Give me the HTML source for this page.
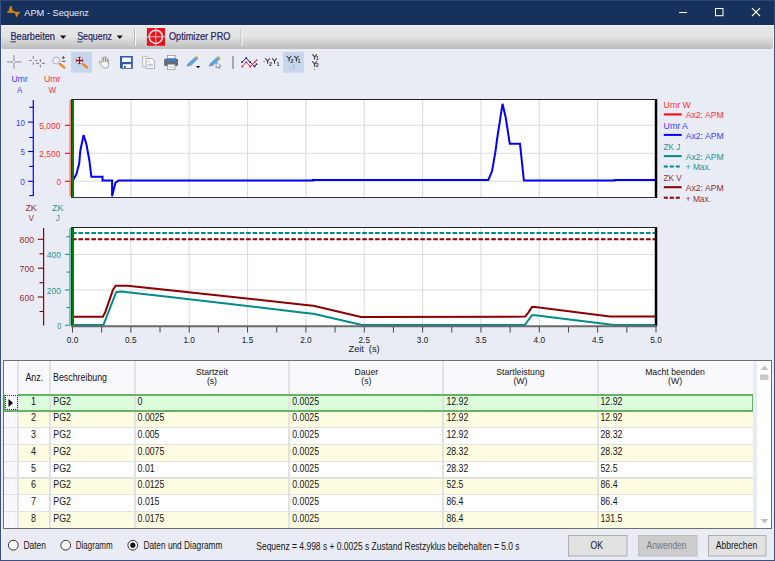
<!DOCTYPE html><html><head><meta charset="utf-8"><style>
*{margin:0;padding:0;box-sizing:border-box}
html,body{width:775px;height:561px;overflow:hidden;background:#e9ecf4;font-family:"Liberation Sans",sans-serif;position:relative}
.a{position:absolute}
svg text{font-family:"Liberation Sans",sans-serif}
</style></head><body>
<div class="a" style="left:0;top:0;width:775px;height:25px;background:#17315d"></div>
<div class="a" style="left:0;top:0;width:1px;height:561px;background:#3a5080"></div>
<div class="a" style="left:774px;top:0;width:1px;height:561px;background:#3a5080"></div>
<div class="a" style="left:0;top:0;width:775px;height:1px;background:#2f466f"></div>
<div class="a" style="left:0;top:560px;width:775px;height:1px;background:#3a5080"></div>
<div class="a" style="left:1px;top:25px;width:773px;height:23.6px;background:linear-gradient(#f4f4f4 0px,#e7e7e7 1.5px,#e5e5e5 11px,#d2d2d2 17px,#bebebe 23.6px);border-radius:0 0 3px 3px;border-right:1px solid #f4f4f4"></div>
<div class="a" style="left:3px;top:360px;width:769px;height:169px;border:1px solid #6e6e6e;background:#fff"></div>
<div class="a" style="left:4px;top:361px;width:767px;height:33.5px;background:#f8f8fd"></div>
<div class="a" style="left:4px;top:394.5px;width:13.5px;height:133px;background:#f7f7fd"></div>
<div class="a" style="left:753px;top:361px;width:4px;height:167px;background:#e8ebf3"></div>
<div class="a" style="left:757px;top:361px;width:14px;height:167px;background:#ffffff"></div>
<div class="a" style="left:17.5px;top:394.50px;width:735.1px;height:16.69px;background:#dcfcdc"></div>
<div class="a" style="left:17.5px;top:411.19px;width:735.1px;height:16.69px;background:#fefde2"></div>
<div class="a" style="left:17.5px;top:427.88px;width:735.1px;height:16.69px;background:#ffffff"></div>
<div class="a" style="left:17.5px;top:444.57px;width:735.1px;height:16.69px;background:#fefde2"></div>
<div class="a" style="left:17.5px;top:461.26px;width:735.1px;height:16.69px;background:#ffffff"></div>
<div class="a" style="left:17.5px;top:477.95px;width:735.1px;height:16.69px;background:#fefde2"></div>
<div class="a" style="left:17.5px;top:494.64px;width:735.1px;height:16.69px;background:#ffffff"></div>
<div class="a" style="left:17.5px;top:511.33px;width:735.1px;height:16.69px;background:#fefde2"></div>
<div class="a" style="left:4px;top:410.59px;width:749px;height:1.2px;background:#e2e2e2"></div>
<div class="a" style="left:4px;top:427.28px;width:749px;height:1.2px;background:#e2e2e2"></div>
<div class="a" style="left:4px;top:443.97px;width:749px;height:1.2px;background:#e2e2e2"></div>
<div class="a" style="left:4px;top:460.66px;width:749px;height:1.2px;background:#e2e2e2"></div>
<div class="a" style="left:4px;top:477.35px;width:749px;height:1.2px;background:#e2e2e2"></div>
<div class="a" style="left:4px;top:494.04px;width:749px;height:1.2px;background:#e2e2e2"></div>
<div class="a" style="left:4px;top:510.73px;width:749px;height:1.2px;background:#e2e2e2"></div>
<div class="a" style="left:16.7px;top:361px;width:2px;height:167px;background:#e2e2e2"></div>
<div class="a" style="left:48.9px;top:361px;width:2px;height:167px;background:#e2e2e2"></div>
<div class="a" style="left:133.6px;top:361px;width:2px;height:167px;background:#e2e2e2"></div>
<div class="a" style="left:288.3px;top:361px;width:2px;height:167px;background:#e2e2e2"></div>
<div class="a" style="left:442.4px;top:361px;width:2px;height:167px;background:#e2e2e2"></div>
<div class="a" style="left:596.5px;top:361px;width:2px;height:167px;background:#e2e2e2"></div>
<div class="a" style="left:17.5px;top:394px;width:735.5px;height:2px;background:#66b266"></div>
<div class="a" style="left:4px;top:410px;width:749px;height:2px;background:#66b266"></div>
<div class="a" style="left:751.5px;top:394px;width:1.5px;height:18px;background:#66b266"></div>
<div class="a" style="left:4px;top:394.5px;width:1.2px;height:17px;background:#66b266"></div>
<div class="a" style="left:4.8px;top:395px;width:12.8px;height:15.4px;border:1px dotted #333"></div>
<svg class="a" style="left:0;top:0" width="775" height="561" viewBox="0 0 775 561"><path d="M7 12.6 L8.6 11 L10 6 L11.6 6 L12.6 10.5 L15 11.2 L15 12.6 Z" fill="#d08010"/><path d="M7 12.3 H20" stroke="#d08010" stroke-width="1"/><path d="M14.3 12 L20 12 L16.5 17.5 Z" fill="#d08010"/><path d="M679 12.5 H687" stroke="#fff" stroke-width="1"/><rect x="715.5" y="8.5" width="7.5" height="7.2" fill="none" stroke="#fff" stroke-width="1"/><path d="M752 8.2 L760 16 M760 8.2 L752 16" stroke="#fff" stroke-width="1.1"/><text x="24.30" y="16.10" font-size="9.9" fill="#e8eef8" textLength="64.70" lengthAdjust="spacingAndGlyphs">APM - Sequenz</text><text x="10.40" y="40.10" font-size="10.4" fill="#241f62" textLength="44.60" lengthAdjust="spacingAndGlyphs" stroke="#241f62" stroke-width="0.22">Bearbeiten</text><path d="M10.4 41.8 H16" stroke="#2f2a6a" stroke-width="0.9"/><text x="77.20" y="40.10" font-size="10.4" fill="#241f62" textLength="34.80" lengthAdjust="spacingAndGlyphs" stroke="#241f62" stroke-width="0.22">Sequenz</text><path d="M77.2 41.8 H82.5" stroke="#2f2a6a" stroke-width="0.9"/><text x="169.00" y="40.10" font-size="10.4" fill="#241f62" textLength="61.40" lengthAdjust="spacingAndGlyphs" stroke="#241f62" stroke-width="0.22">Optimizer PRO</text><path d="M60 35.6 H66.2 L63.1 39 Z M116.7 35.6 H122.9 L119.8 39 Z" fill="#111"/><path d="M134.5 29 V46 M241 29 V46" stroke="#b8b8b8" stroke-width="1"/><path d="M135.5 29 V46 M242 29 V46" stroke="#f8f8f8" stroke-width="1"/><rect x="146.9" y="28" width="18.1" height="17.8" fill="#e6121c"/><circle cx="155.8" cy="36.8" r="6.6" fill="none" stroke="#fbe4e4" stroke-width="1.5"/><path d="M146.9 36.8 H165 M155.8 28 V45.8" stroke="#f6d8d8" stroke-width="0.9"/><rect x="71" y="52" width="21" height="20.7" fill="#c6d6ec"/><rect x="283" y="52" width="21" height="20.7" fill="#c6d6ec"/><path d="M7.1 61.9 H13 M14.8 61.9 H21.6 M13.9 55.1 V61 M13.9 62.8 V68.8" stroke="#b4b4b4" stroke-width="1.7"/><path d="M29 60.5 H31.8 M34.7 60.5 H37.5 M33.3 56.3 V59.1 M33.3 62.2 V64.8 M36.1 63.4 H39 M41.8 63.4 H44.9 M40.4 59.1 V62 M40.4 64.8 V67.6" stroke="#8c8c8c" stroke-width="1.2"/><circle cx="56.2" cy="60.5" r="3.5" fill="#f2f2f2" stroke="#93a3cc" stroke-width="0.9"/><path d="M60 64 L64.3 67.7" stroke="#ee8a1c" stroke-width="2.4" stroke-linecap="round"/><path d="M61.6 57.7 H65.2 M63.4 56 V59.4 M61.6 61.4 H65.6" stroke="#505050" stroke-width="0.9"/><circle cx="79.5" cy="60.5" r="3.6" fill="#f4f4f4" stroke="#93a3cc" stroke-width="0.9"/><path d="M76 60.5 H83 M79.5 57 V64" stroke="#a01010" stroke-width="1.3"/><path d="M75.8 60.5 L77 59.3 L77 61.7 Z M83.2 60.5 L82 59.3 L82 61.7 Z M79.5 56.8 L78.3 58 L80.7 58 Z M79.5 64.2 L78.3 63 L80.7 63 Z" fill="#a01010"/><path d="M83.4 64.4 L87 67.5" stroke="#ee8a1c" stroke-width="2.4" stroke-linecap="round"/><path d="M101.5 62.5 L100 61.2 Q99 60.8 99.2 62 L102 66.5 Q103.5 68.2 105.5 68 L107 68 Q108.6 67.5 108.6 65.5 L108.6 59.8 Q108.2 58.8 107.4 59.3 L107.2 62.5 M107.2 62 L107 58 Q106.6 57 105.6 57.5 L105.4 62 M105.4 61.5 L105.2 57 Q104.6 56.2 103.8 56.8 L103.6 62 M103.6 61.5 L103.4 58 Q102.8 57.2 102 57.8 L101.8 63.5" fill="#fafafa" stroke="#8a8a8a" stroke-width="0.75"/><path d="M120 56 H132.8 V68.8 H121.2 L120 67.6 Z" fill="#2f5aa5"/><rect x="122" y="57.4" width="9.1" height="4.5" rx="0.6" fill="#fff"/><rect x="122.8" y="64.2" width="8.3" height="3.7" fill="#fff"/><rect x="124" y="65.9" width="1.8" height="2" fill="#2f5aa5"/><path d="M142.6 56.3 H147.5 L149.2 58 V66.8 H142.6 Z" fill="#f6f6f6" stroke="#b0b0b0" stroke-width="0.8"/><path d="M146 58.5 H152 L154.6 61.1 V68.5 H146 Z" fill="#fafafa" stroke="#a0a0a0" stroke-width="0.8"/><path d="M147.5 61.5 H149.5 M147.5 64.3 H153 M147.5 65.8 H153" stroke="#9aa4d4" stroke-width="0.7"/><rect x="167.5" y="55.4" width="7.5" height="3.5" fill="#fdfdfd" stroke="#8a8a8a" stroke-width="0.7"/><rect x="164.1" y="58.8" width="13.9" height="7.1" rx="0.8" fill="#6a6a6a"/><rect x="166.4" y="58.4" width="9.4" height="3" fill="#3b7ac6"/><rect x="167.5" y="64.2" width="7.5" height="5.1" fill="#fdfdfd" stroke="#8a8a8a" stroke-width="0.7"/><rect x="168.5" y="66.5" width="5.5" height="1" fill="#9cc0e8"/><path d="M187 66.1 L188.2 63.6 L195.6 56.8 L197.8 59 L190.4 65.8 Z" fill="#5aa6e6" stroke="#3a86cc" stroke-width="0.4"/><path d="M195.2 57.2 L196.4 56 L198.6 58.2 L197.4 59.4 Z" fill="#f0a020"/><path d="M187 66.1 L188.2 63.6 L189.6 65 Z" fill="#888"/><path d="M196 66 H200.2 L198.1 68.3 Z" fill="#111"/><path d="M209.1 66.1 L210.3 63.6 L217.7 56.8 L219.9 59 L212.5 65.8 Z" fill="#5aa6e6" stroke="#3a86cc" stroke-width="0.4"/><path d="M217.3 57.2 L218.5 56 L220.7 58.2 L219.5 59.4 Z" fill="#f0a020"/><path d="M209.1 66.1 L210.3 63.6 L211.7 65 Z" fill="#888"/><path d="M216.2 62 V68 L217.6 66.8 L218.8 68.6 L219.8 68.1 L218.8 66.3 L221 66.2 Z" fill="#fff" stroke="#707070" stroke-width="0.7"/><path d="M233 56 V69" stroke="#9a9a9a" stroke-width="1.6"/><polyline points="242,62.2 246.2,58 250.2,62.2 254.5,66.5 256.5,64.2" fill="none" stroke="#22228a" stroke-width="1"/><polyline points="242.3,66.5 246.2,62.2 250.2,66.5 254.5,62.2 256.5,60.2" fill="none" stroke="#ee3030" stroke-width="1"/><circle cx="242" cy="62.2" r="0.9" fill="#1a1a8a"/><circle cx="246.2" cy="58" r="0.9" fill="#1a1a8a"/><circle cx="250.2" cy="62.2" r="0.9" fill="#1a1a8a"/><circle cx="254.5" cy="66.5" r="0.9" fill="#1a1a8a"/><circle cx="256.5" cy="64.2" r="0.9" fill="#1a1a8a"/><circle cx="242.3" cy="66.5" r="0.9" fill="#ee2020"/><circle cx="246.2" cy="62.2" r="0.9" fill="#ee2020"/><circle cx="250.2" cy="66.5" r="0.9" fill="#ee2020"/><circle cx="254.5" cy="62.2" r="0.9" fill="#ee2020"/><circle cx="256.5" cy="60.2" r="0.9" fill="#ee2020"/><path d="M263.3 61.5 H265" stroke="#777" stroke-width="0.8"/><path d="M265.3 58.3 L267.55 61.0 L269.8 58.3 M267.55 61.0 V63.699999999999996" fill="none" stroke="#3a3a3a" stroke-width="1.1"/><text x="269" y="65.6" font-size="5.4" font-weight="bold" fill="#3a3a3a">2</text><path d="M272.3 58.3 L274.55 61.0 L276.8 58.3 M274.55 61.0 V63.699999999999996" fill="none" stroke="#3a3a3a" stroke-width="1.1"/><text x="276.4" y="65.6" font-size="5.4" font-weight="bold" fill="#3a3a3a">1</text><path d="M286.8 56 L289.05 58.7 L291.3 56 M289.05 58.7 V61.4" fill="none" stroke="#3a3a3a" stroke-width="1.1"/><text x="290.6" y="63" font-size="5.4" font-weight="bold" fill="#3a3a3a">2</text><path d="M294.2 56 L296.45 58.7 L298.7 56 M296.45 58.7 V61.4" fill="none" stroke="#3a3a3a" stroke-width="1.1"/><text x="297.6" y="63" font-size="5.4" font-weight="bold" fill="#3a3a3a">1</text><path d="M293.6 65 V68.8" stroke="#777" stroke-width="0.8" stroke-dasharray="1 1.2"/><path d="M312.4 54.3 L314.59999999999997 56.849999999999994 L316.79999999999995 54.3 M314.59999999999997 56.849999999999994 V59.4" fill="none" stroke="#3a3a3a" stroke-width="1.1"/><text x="315.8" y="59.8" font-size="5.4" font-weight="bold" fill="#3a3a3a">1</text><path d="M312.4 61.4 L314.59999999999997 64.1 L316.79999999999995 61.4 M314.59999999999997 64.1 V66.8" fill="none" stroke="#3a3a3a" stroke-width="1.1"/><text x="315.8" y="67.2" font-size="5.4" font-weight="bold" fill="#3a3a3a">2</text><circle cx="314.4" cy="69.3" r="0.5" fill="#555"/><rect x="71" y="99" width="586" height="99" fill="#fff"/><path d="M130.85 99 V198" stroke="#dcdcdc" stroke-width="1.1"/><path d="M189.20 99 V198" stroke="#dcdcdc" stroke-width="1.1"/><path d="M247.55 99 V198" stroke="#dcdcdc" stroke-width="1.1"/><path d="M305.90 99 V198" stroke="#dcdcdc" stroke-width="1.1"/><path d="M364.25 99 V198" stroke="#dcdcdc" stroke-width="1.1"/><path d="M422.60 99 V198" stroke="#dcdcdc" stroke-width="1.1"/><path d="M480.95 99 V198" stroke="#dcdcdc" stroke-width="1.1"/><path d="M539.30 99 V198" stroke="#dcdcdc" stroke-width="1.1"/><path d="M597.65 99 V198" stroke="#dcdcdc" stroke-width="1.1"/><path d="M71 125.3 H655" stroke="#dcdcdc" stroke-width="1.1"/><path d="M71 153.3 H655" stroke="#dcdcdc" stroke-width="1.1"/><path d="M71 181.3 H655" stroke="#dcdcdc" stroke-width="1.1"/><polyline points="72.9,180.6 76.4,174.2 79.3,162.8 80.3,150.7 83.6,135 86.4,144.3 89.3,160 91.4,176.8 102.5,176.8 102.5,180.6 112.1,180.6 112.1,196.3 115.4,182.8 118.5,180.6 313,180.6 313,180 488.3,180 492,171.3 495.4,151.8 497.1,139 499.7,122.1 502.5,103.8 505.6,117 509.8,143.8 520,143.8 523.9,180.6 614.5,180.6 614.5,180 655,180" fill="none" stroke="#0000ff" stroke-width="2"/><path d="M73 99 V198" stroke="#008000" stroke-width="2"/><path d="M71 99.5 H657" stroke="#222" stroke-width="1"/><path d="M71 197.5 H657" stroke="#333" stroke-width="1"/><path d="M71.5 99 V198" stroke="#333" stroke-width="1"/><path d="M656 99 V198" stroke="#000" stroke-width="2.5"/><path d="M33.3 100 V196" stroke="#0000ff" stroke-width="1.2"/><path d="M28 122.1 H33.3" stroke="#0000ff" stroke-width="1.1"/><path d="M28 151.5 H33.3" stroke="#0000ff" stroke-width="1.1"/><path d="M28 181.3 H33.3" stroke="#0000ff" stroke-width="1.1"/><path d="M29.2 107.3 H33.3" stroke="#0000ff" stroke-width="1.1"/><path d="M29.2 137.5 H33.3" stroke="#0000ff" stroke-width="1.1"/><path d="M29.2 166.4 H33.3" stroke="#0000ff" stroke-width="1.1"/><path d="M29.2 195.6 H33.3" stroke="#0000ff" stroke-width="1.1"/><path d="M70.2 100 V196" stroke="#ff8080" stroke-width="1.6"/><path d="M65 125.3 H70" stroke="#ff0000" stroke-width="1.1"/><path d="M65 153.3 H70" stroke="#ff0000" stroke-width="1.1"/><path d="M65 181.3 H70" stroke="#ff0000" stroke-width="1.1"/><text x="16.00" y="125.80" font-size="9" fill="#3c3cff" textLength="8.80" lengthAdjust="spacingAndGlyphs">10</text><text x="20.40" y="155.10" font-size="9" fill="#3c3cff" textLength="4.40" lengthAdjust="spacingAndGlyphs">5</text><text x="20.20" y="184.90" font-size="9" fill="#3c3cff" textLength="4.60" lengthAdjust="spacingAndGlyphs">0</text><text x="39.30" y="129.00" font-size="9" fill="#ff3030" textLength="21.20" lengthAdjust="spacingAndGlyphs">5,000</text><text x="39.30" y="157.00" font-size="9" fill="#ff3030" textLength="21.20" lengthAdjust="spacingAndGlyphs">2,500</text><text x="56.50" y="185.00" font-size="9" fill="#ff3030" textLength="4.50" lengthAdjust="spacingAndGlyphs">0</text><text x="11.60" y="82.40" font-size="9" fill="#3c3cff" textLength="16.30" lengthAdjust="spacingAndGlyphs">Umr</text><text x="17.10" y="92.80" font-size="9" fill="#3c3cff" textLength="5.40" lengthAdjust="spacingAndGlyphs">A</text><text x="44.00" y="82.40" font-size="9" fill="#ff3030" textLength="16.40" lengthAdjust="spacingAndGlyphs">Umr</text><text x="48.38" y="92.80" font-size="9" fill="#ff3030" textLength="7.65" lengthAdjust="spacingAndGlyphs">W</text><rect x="71" y="227.5" width="586" height="98.5" fill="#fff"/><path d="M130.85 227.5 V326" stroke="#dcdcdc" stroke-width="1.1"/><path d="M189.20 227.5 V326" stroke="#dcdcdc" stroke-width="1.1"/><path d="M247.55 227.5 V326" stroke="#dcdcdc" stroke-width="1.1"/><path d="M305.90 227.5 V326" stroke="#dcdcdc" stroke-width="1.1"/><path d="M364.25 227.5 V326" stroke="#dcdcdc" stroke-width="1.1"/><path d="M422.60 227.5 V326" stroke="#dcdcdc" stroke-width="1.1"/><path d="M480.95 227.5 V326" stroke="#dcdcdc" stroke-width="1.1"/><path d="M539.30 227.5 V326" stroke="#dcdcdc" stroke-width="1.1"/><path d="M597.65 227.5 V326" stroke="#dcdcdc" stroke-width="1.1"/><path d="M71 254.5 H655" stroke="#dcdcdc" stroke-width="1.1"/><path d="M71 290 H655" stroke="#dcdcdc" stroke-width="1.1"/><path d="M72 233.1 H655" stroke="#008b8b" stroke-width="2" stroke-dasharray="4.6 1.85"/><path d="M72 239.3 H655" stroke="#8b0000" stroke-width="2" stroke-dasharray="4.6 1.85"/><polyline points="72,316.7 102.8,316.7 105,312.8 113,289.8 115.7,285.8 127.4,285.8 170,290.3 305.8,304.9 313.5,305.8 361,317 525.2,316.6 527.7,313.5 531.9,307.1 535.2,307.1 609.9,316.6 655,316.6" fill="none" stroke="#8b0000" stroke-width="2"/><polyline points="72,325 103.4,325 116.2,292.2 121,291.4 170,297 305.8,312.9 313.5,313.8 362,325 524.8,325 531.9,315.2 535.2,315.2 614.1,325 655,325" fill="none" stroke="#008b8b" stroke-width="2"/><path d="M73 227.5 V326" stroke="#008000" stroke-width="2"/><path d="M71 227.5 H657" stroke="#222" stroke-width="1"/><path d="M71.5 227.5 V326" stroke="#333" stroke-width="1"/><path d="M656 227.5 V326" stroke="#000" stroke-width="2.5"/><path d="M71 326.2 H657" stroke="#6a6a6a" stroke-width="2"/><path d="M72.50 327 V332.5" stroke="#444" stroke-width="1"/><path d="M101.67 327 V332.5" stroke="#444" stroke-width="1"/><path d="M130.85 327 V332.5" stroke="#444" stroke-width="1"/><path d="M160.03 327 V332.5" stroke="#444" stroke-width="1"/><path d="M189.20 327 V332.5" stroke="#444" stroke-width="1"/><path d="M218.38 327 V332.5" stroke="#444" stroke-width="1"/><path d="M247.55 327 V332.5" stroke="#444" stroke-width="1"/><path d="M276.73 327 V332.5" stroke="#444" stroke-width="1"/><path d="M305.90 327 V332.5" stroke="#444" stroke-width="1"/><path d="M335.07 327 V332.5" stroke="#444" stroke-width="1"/><path d="M364.25 327 V332.5" stroke="#444" stroke-width="1"/><path d="M393.43 327 V332.5" stroke="#444" stroke-width="1"/><path d="M422.60 327 V332.5" stroke="#444" stroke-width="1"/><path d="M451.78 327 V332.5" stroke="#444" stroke-width="1"/><path d="M480.95 327 V332.5" stroke="#444" stroke-width="1"/><path d="M510.12 327 V332.5" stroke="#444" stroke-width="1"/><path d="M539.30 327 V332.5" stroke="#444" stroke-width="1"/><path d="M568.48 327 V332.5" stroke="#444" stroke-width="1"/><path d="M597.65 327 V332.5" stroke="#444" stroke-width="1"/><path d="M626.83 327 V332.5" stroke="#444" stroke-width="1"/><path d="M656.00 327 V332.5" stroke="#444" stroke-width="1"/><text x="66.75" y="342.70" font-size="9" fill="#1a1a1a" textLength="11.51" lengthAdjust="spacingAndGlyphs">0.0</text><text x="125.10" y="342.70" font-size="9" fill="#1a1a1a" textLength="11.51" lengthAdjust="spacingAndGlyphs">0.5</text><text x="183.45" y="342.70" font-size="9" fill="#1a1a1a" textLength="11.51" lengthAdjust="spacingAndGlyphs">1.0</text><text x="241.80" y="342.70" font-size="9" fill="#1a1a1a" textLength="11.51" lengthAdjust="spacingAndGlyphs">1.5</text><text x="300.15" y="342.70" font-size="9" fill="#1a1a1a" textLength="11.51" lengthAdjust="spacingAndGlyphs">2.0</text><text x="358.50" y="342.70" font-size="9" fill="#1a1a1a" textLength="11.51" lengthAdjust="spacingAndGlyphs">2.5</text><text x="416.85" y="342.70" font-size="9" fill="#1a1a1a" textLength="11.51" lengthAdjust="spacingAndGlyphs">3.0</text><text x="475.20" y="342.70" font-size="9" fill="#1a1a1a" textLength="11.51" lengthAdjust="spacingAndGlyphs">3.5</text><text x="533.55" y="342.70" font-size="9" fill="#1a1a1a" textLength="11.51" lengthAdjust="spacingAndGlyphs">4.0</text><text x="591.90" y="342.70" font-size="9" fill="#1a1a1a" textLength="11.51" lengthAdjust="spacingAndGlyphs">4.5</text><text x="650.25" y="342.70" font-size="9" fill="#1a1a1a" textLength="11.51" lengthAdjust="spacingAndGlyphs">5.0</text><text x="348.50" y="352.00" font-size="9" fill="#1a1a1a" textLength="15.40" lengthAdjust="spacingAndGlyphs">Zeit</text><text x="368.80" y="352.00" font-size="9" fill="#1a1a1a" textLength="10.90" lengthAdjust="spacingAndGlyphs">(s)</text><path d="M43.6 228 V325.5" stroke="#8b0000" stroke-width="1.2"/><path d="M37.8 239.3 H43.6" stroke="#8b0000" stroke-width="1.1"/><text x="19.60" y="243.00" font-size="9" fill="#963030" textLength="14.60" lengthAdjust="spacingAndGlyphs">800</text><path d="M37.8 268.2 H43.6" stroke="#8b0000" stroke-width="1.1"/><text x="19.60" y="271.85" font-size="9" fill="#963030" textLength="14.60" lengthAdjust="spacingAndGlyphs">700</text><path d="M37.8 297.0 H43.6" stroke="#8b0000" stroke-width="1.1"/><text x="19.60" y="300.70" font-size="9" fill="#963030" textLength="14.60" lengthAdjust="spacingAndGlyphs">600</text><path d="M39.5 253.8 H43.6" stroke="#8b0000" stroke-width="1.1"/><path d="M39.5 282.7 H43.6" stroke="#8b0000" stroke-width="1.1"/><path d="M39.5 311.5 H43.6" stroke="#8b0000" stroke-width="1.1"/><path d="M70 228 V325.5" stroke="#78bcc0" stroke-width="2"/><path d="M65 254.4 H69.5" stroke="#1f9494" stroke-width="1.1"/><text x="46.80" y="258.12" font-size="9" fill="#1f9494" textLength="14.10" lengthAdjust="spacingAndGlyphs">400</text><path d="M65 289.9 H69.5" stroke="#1f9494" stroke-width="1.1"/><text x="46.80" y="293.56" font-size="9" fill="#1f9494" textLength="14.10" lengthAdjust="spacingAndGlyphs">200</text><path d="M65 325.3 H69.5" stroke="#1f9494" stroke-width="1.1"/><text x="57.20" y="329.00" font-size="9" fill="#1f9494" textLength="4.10" lengthAdjust="spacingAndGlyphs">0</text><path d="M66.4 236.7 H69.5" stroke="#1f9494" stroke-width="1.1"/><path d="M66.4 272.1 H69.5" stroke="#1f9494" stroke-width="1.1"/><path d="M66.4 307.6 H69.5" stroke="#1f9494" stroke-width="1.1"/><text x="25.40" y="210.50" font-size="9" fill="#963030" textLength="11.40" lengthAdjust="spacingAndGlyphs">ZK</text><text x="28.40" y="220.80" font-size="9" fill="#963030" textLength="5.40" lengthAdjust="spacingAndGlyphs">V</text><text x="52.00" y="210.50" font-size="9" fill="#1f9494" textLength="11.50" lengthAdjust="spacingAndGlyphs">ZK</text><text x="55.77" y="220.80" font-size="9" fill="#1f9494" textLength="4.05" lengthAdjust="spacingAndGlyphs">J</text><text x="663.60" y="107.80" font-size="9" fill="#ff3030" textLength="27.10" lengthAdjust="spacingAndGlyphs">Umr W</text><path d="M663.8 114.4 H681.7" stroke="#ff0000" stroke-width="2"/><text x="685.70" y="118.10" font-size="9" fill="#ff3030" textLength="38.00" lengthAdjust="spacingAndGlyphs">Ax2: APM</text><text x="663.60" y="128.70" font-size="9" fill="#3c3cff" textLength="24.40" lengthAdjust="spacingAndGlyphs">Umr A</text><path d="M663.8 134.9 H681.7" stroke="#0000ff" stroke-width="2"/><text x="685.70" y="138.70" font-size="9" fill="#3c3cff" textLength="38.00" lengthAdjust="spacingAndGlyphs">Ax2: APM</text><text x="663.60" y="149.60" font-size="9" fill="#1f9494" textLength="16.65" lengthAdjust="spacingAndGlyphs">ZK J</text><path d="M663.8 156.1 H681.7" stroke="#008b8b" stroke-width="2"/><text x="685.70" y="159.90" font-size="9" fill="#1f9494" textLength="38.00" lengthAdjust="spacingAndGlyphs">Ax2: APM</text><path d="M663.8 166.4 H681.7" stroke="#008b8b" stroke-width="2" stroke-dasharray="4 2"/><text x="685.70" y="170.20" font-size="9" fill="#1f9494" textLength="25.30" lengthAdjust="spacingAndGlyphs">+ Max.</text><text x="663.60" y="180.70" font-size="9" fill="#963030" textLength="18.00" lengthAdjust="spacingAndGlyphs">ZK V</text><path d="M663.8 187.2 H681.7" stroke="#8b0000" stroke-width="2"/><text x="685.70" y="191.00" font-size="9" fill="#963030" textLength="38.00" lengthAdjust="spacingAndGlyphs">Ax2: APM</text><path d="M663.8 197.8 H681.7" stroke="#8b0000" stroke-width="2" stroke-dasharray="4 2"/><text x="685.70" y="201.60" font-size="9" fill="#963030" textLength="25.30" lengthAdjust="spacingAndGlyphs">+ Max.</text><path d="M8.5 399 L13 403 L8.5 407 Z" fill="#000"/><text x="25.40" y="380.70" font-size="10" fill="#151515" textLength="17.80" lengthAdjust="spacingAndGlyphs">Anz.</text><text x="53.10" y="380.70" font-size="10" fill="#151515" textLength="53.90" lengthAdjust="spacingAndGlyphs">Beschreibung</text><text x="196.04" y="375.30" font-size="9.8" fill="#151515" textLength="31.81" lengthAdjust="spacingAndGlyphs">Startzeit</text><text x="206.89" y="384.20" font-size="9.8" fill="#151515" textLength="10.11" lengthAdjust="spacingAndGlyphs">(s)</text><text x="354.54" y="375.30" font-size="9.8" fill="#151515" textLength="23.62" lengthAdjust="spacingAndGlyphs">Dauer</text><text x="361.29" y="384.20" font-size="9.8" fill="#151515" textLength="10.11" lengthAdjust="spacingAndGlyphs">(s)</text><text x="496.34" y="375.30" font-size="9.8" fill="#151515" textLength="48.21" lengthAdjust="spacingAndGlyphs">Startleistung</text><text x="513.47" y="384.20" font-size="9.8" fill="#151515" textLength="13.96" lengthAdjust="spacingAndGlyphs">(W)</text><text x="645.15" y="375.30" font-size="9.8" fill="#151515" textLength="59.79" lengthAdjust="spacingAndGlyphs">Macht beenden</text><text x="668.07" y="384.20" font-size="9.8" fill="#151515" textLength="13.96" lengthAdjust="spacingAndGlyphs">(W)</text><text x="31.10" y="404.80" font-size="10" fill="#151515" textLength="5.01" lengthAdjust="spacingAndGlyphs">1</text><text x="53.30" y="404.80" font-size="10" fill="#151515" textLength="17.71" lengthAdjust="spacingAndGlyphs">PG2</text><text x="137.60" y="404.80" font-size="10" fill="#151515" textLength="4.87" lengthAdjust="spacingAndGlyphs">0</text><text x="292.30" y="404.80" font-size="10" fill="#151515" textLength="26.76" lengthAdjust="spacingAndGlyphs">0.0025</text><text x="446.40" y="404.80" font-size="10" fill="#151515" textLength="21.90" lengthAdjust="spacingAndGlyphs">12.92</text><text x="600.50" y="404.80" font-size="10" fill="#151515" textLength="21.90" lengthAdjust="spacingAndGlyphs">12.92</text><text x="31.10" y="421.49" font-size="10" fill="#151515" textLength="5.01" lengthAdjust="spacingAndGlyphs">2</text><text x="53.30" y="421.49" font-size="10" fill="#151515" textLength="17.71" lengthAdjust="spacingAndGlyphs">PG2</text><text x="137.60" y="421.49" font-size="10" fill="#151515" textLength="26.76" lengthAdjust="spacingAndGlyphs">0.0025</text><text x="292.30" y="421.49" font-size="10" fill="#151515" textLength="26.76" lengthAdjust="spacingAndGlyphs">0.0025</text><text x="446.40" y="421.49" font-size="10" fill="#151515" textLength="21.90" lengthAdjust="spacingAndGlyphs">12.92</text><text x="600.50" y="421.49" font-size="10" fill="#151515" textLength="21.90" lengthAdjust="spacingAndGlyphs">12.92</text><text x="31.10" y="438.18" font-size="10" fill="#151515" textLength="5.01" lengthAdjust="spacingAndGlyphs">3</text><text x="53.30" y="438.18" font-size="10" fill="#151515" textLength="17.71" lengthAdjust="spacingAndGlyphs">PG2</text><text x="137.60" y="438.18" font-size="10" fill="#151515" textLength="21.90" lengthAdjust="spacingAndGlyphs">0.005</text><text x="292.30" y="438.18" font-size="10" fill="#151515" textLength="26.76" lengthAdjust="spacingAndGlyphs">0.0025</text><text x="446.40" y="438.18" font-size="10" fill="#151515" textLength="21.90" lengthAdjust="spacingAndGlyphs">12.92</text><text x="600.50" y="438.18" font-size="10" fill="#151515" textLength="21.90" lengthAdjust="spacingAndGlyphs">28.32</text><text x="31.10" y="454.87" font-size="10" fill="#151515" textLength="5.01" lengthAdjust="spacingAndGlyphs">4</text><text x="53.30" y="454.87" font-size="10" fill="#151515" textLength="17.71" lengthAdjust="spacingAndGlyphs">PG2</text><text x="137.60" y="454.87" font-size="10" fill="#151515" textLength="26.76" lengthAdjust="spacingAndGlyphs">0.0075</text><text x="292.30" y="454.87" font-size="10" fill="#151515" textLength="26.76" lengthAdjust="spacingAndGlyphs">0.0025</text><text x="446.40" y="454.87" font-size="10" fill="#151515" textLength="21.90" lengthAdjust="spacingAndGlyphs">28.32</text><text x="600.50" y="454.87" font-size="10" fill="#151515" textLength="21.90" lengthAdjust="spacingAndGlyphs">28.32</text><text x="31.10" y="471.56" font-size="10" fill="#151515" textLength="5.01" lengthAdjust="spacingAndGlyphs">5</text><text x="53.30" y="471.56" font-size="10" fill="#151515" textLength="17.71" lengthAdjust="spacingAndGlyphs">PG2</text><text x="137.60" y="471.56" font-size="10" fill="#151515" textLength="17.03" lengthAdjust="spacingAndGlyphs">0.01</text><text x="292.30" y="471.56" font-size="10" fill="#151515" textLength="26.76" lengthAdjust="spacingAndGlyphs">0.0025</text><text x="446.40" y="471.56" font-size="10" fill="#151515" textLength="21.90" lengthAdjust="spacingAndGlyphs">28.32</text><text x="600.50" y="471.56" font-size="10" fill="#151515" textLength="17.03" lengthAdjust="spacingAndGlyphs">52.5</text><text x="31.10" y="488.25" font-size="10" fill="#151515" textLength="5.01" lengthAdjust="spacingAndGlyphs">6</text><text x="53.30" y="488.25" font-size="10" fill="#151515" textLength="17.71" lengthAdjust="spacingAndGlyphs">PG2</text><text x="137.60" y="488.25" font-size="10" fill="#151515" textLength="26.76" lengthAdjust="spacingAndGlyphs">0.0125</text><text x="292.30" y="488.25" font-size="10" fill="#151515" textLength="26.76" lengthAdjust="spacingAndGlyphs">0.0025</text><text x="446.40" y="488.25" font-size="10" fill="#151515" textLength="17.03" lengthAdjust="spacingAndGlyphs">52.5</text><text x="600.50" y="488.25" font-size="10" fill="#151515" textLength="17.03" lengthAdjust="spacingAndGlyphs">86.4</text><text x="31.10" y="504.94" font-size="10" fill="#151515" textLength="5.01" lengthAdjust="spacingAndGlyphs">7</text><text x="53.30" y="504.94" font-size="10" fill="#151515" textLength="17.71" lengthAdjust="spacingAndGlyphs">PG2</text><text x="137.60" y="504.94" font-size="10" fill="#151515" textLength="21.90" lengthAdjust="spacingAndGlyphs">0.015</text><text x="292.30" y="504.94" font-size="10" fill="#151515" textLength="26.76" lengthAdjust="spacingAndGlyphs">0.0025</text><text x="446.40" y="504.94" font-size="10" fill="#151515" textLength="17.03" lengthAdjust="spacingAndGlyphs">86.4</text><text x="600.50" y="504.94" font-size="10" fill="#151515" textLength="17.03" lengthAdjust="spacingAndGlyphs">86.4</text><text x="31.10" y="521.63" font-size="10" fill="#151515" textLength="5.01" lengthAdjust="spacingAndGlyphs">8</text><text x="53.30" y="521.63" font-size="10" fill="#151515" textLength="17.71" lengthAdjust="spacingAndGlyphs">PG2</text><text x="137.60" y="521.63" font-size="10" fill="#151515" textLength="26.76" lengthAdjust="spacingAndGlyphs">0.0175</text><text x="292.30" y="521.63" font-size="10" fill="#151515" textLength="26.76" lengthAdjust="spacingAndGlyphs">0.0025</text><text x="446.40" y="521.63" font-size="10" fill="#151515" textLength="17.03" lengthAdjust="spacingAndGlyphs">86.4</text><text x="600.50" y="521.63" font-size="10" fill="#151515" textLength="21.90" lengthAdjust="spacingAndGlyphs">131.5</text><path d="M760.5 370 L764.5 365.5 L768.5 370 Z" fill="#c2c2c2"/><rect x="760" y="374.5" width="8.5" height="5.5" fill="#c8c8c8"/><path d="M760.5 519 L764.5 523.5 L768.5 519 Z" fill="#c2c2c2"/><circle cx="13.3" cy="545.2" r="4.9" fill="#fff" stroke="#333" stroke-width="1"/><circle cx="65.7" cy="545.2" r="4.9" fill="#fff" stroke="#333" stroke-width="1"/><circle cx="132.8" cy="545.2" r="4.9" fill="#fff" stroke="#333" stroke-width="1"/><circle cx="132.8" cy="545.2" r="2.6" fill="#111"/><text x="23.50" y="549.20" font-size="10.4" fill="#151515" textLength="22.50" lengthAdjust="spacingAndGlyphs">Daten</text><text x="75.80" y="549.20" font-size="10.4" fill="#151515" textLength="36.90" lengthAdjust="spacingAndGlyphs">Diagramm</text><text x="143.40" y="549.20" font-size="10.4" fill="#151515" textLength="79.00" lengthAdjust="spacingAndGlyphs">Daten und Diagramm</text><text x="256.30" y="550.10" font-size="10.4" fill="#151515" textLength="263.30" lengthAdjust="spacingAndGlyphs">Sequenz = 4.998 s + 0.0025 s Zustand Restzyklus beibehalten = 5.0 s</text><rect x="568.5" y="535.5" width="58.5" height="20.5" fill="#e1e1e1" stroke="#adadad" stroke-width="1"/><rect x="638.5" y="535.5" width="58.5" height="20.5" fill="#cccccc" stroke="#bfbfbf" stroke-width="1"/><rect x="708.5" y="535.5" width="57.5" height="20.5" fill="#e1e1e1" stroke="#adadad" stroke-width="1"/><text x="590.50" y="549.20" font-size="10.4" fill="#151515" textLength="12.50" lengthAdjust="spacingAndGlyphs">OK</text><text x="646.50" y="549.20" font-size="10.4" fill="#767686" textLength="40.00" lengthAdjust="spacingAndGlyphs">Anwenden</text><text x="715.70" y="549.20" font-size="10.4" fill="#151515" textLength="41.50" lengthAdjust="spacingAndGlyphs">Abbrechen</text></svg>
</body></html>
